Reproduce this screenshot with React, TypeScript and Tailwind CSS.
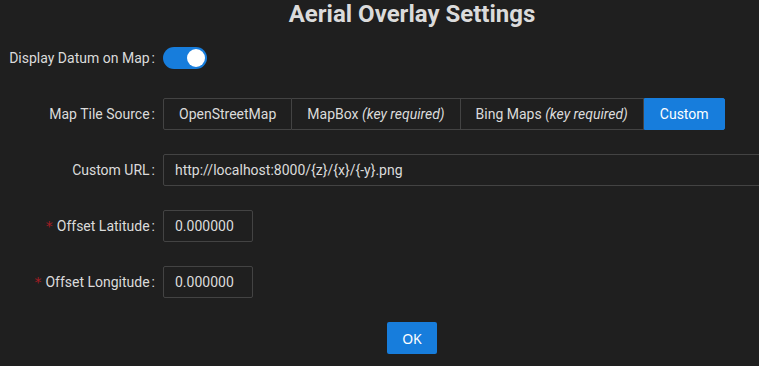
import React from "react";

function Label({ text, required }: { text: string; required?: boolean }) {
  return (
    <div className="w-[163px] shrink-0 flex items-center justify-end h-8 text-[14px] text-[#dbdbdb] whitespace-nowrap">
      {required && <span className="text-[#a61d24] mr-1 text-[14px] leading-none" style={{ fontFamily: "SimSun, 'DejaVu Sans', sans-serif" }}>*</span>}
      <span>{text}</span>
      <span className="ml-[2px] mr-2">:</span>
    </div>
  );
}

export default function App() {
  return (
    <div className="w-[759px] h-[366px] overflow-hidden bg-[#1f1f1f]" style={{ fontFamily: "Roboto, 'Liberation Sans', sans-serif" }}>
      <div className="w-[824px] flex flex-col">
        <h2 className="text-center text-[24px] leading-[28px] font-bold text-[#dbdbdb]">Aerial Overlay Settings</h2>
        <div className="mt-[14px] flex flex-col gap-6">
          <div className="flex items-center">
            <Label text="Display Datum on Map" />
            <div className="relative w-[44px] h-[22px] rounded-full bg-[#177ddc]">
              <div className="absolute top-[2px] right-[2px] w-[18px] h-[18px] rounded-full bg-white" />
            </div>
          </div>
          <div className="flex items-center">
            <Label text="Map Tile Source" />
            <div className="flex h-8 text-[14px] text-[#dbdbdb]">
              <div className="h-8 px-[15px] flex items-center border border-[#434343] rounded-l-[2px]">OpenStreetMap</div>
              <div className="h-8 px-[15px] flex items-center border-y border-r border-[#434343]">MapBox&nbsp;<i>(key required)</i></div>
              <div className="h-8 px-[15px] flex items-center border-y border-r border-[#434343]">Bing Maps&nbsp;<i>(key required)</i></div>
              <div className="h-8 px-[15px] flex items-center border border-[#177ddc] bg-[#177ddc] text-white rounded-r-[2px]">Custom</div>
            </div>
          </div>
          <div className="flex items-center">
            <Label text="Custom URL" />
            <div className="h-8 w-[640px] border border-[#434343] rounded-[2px] px-[11px] flex items-center text-[14px] text-[#dbdbdb]">
              http://localhost:8000/{"{z}"}/{"{x}"}/{"{-y}"}.png
            </div>
          </div>
          <div className="flex items-center">
            <Label text="Offset Latitude" required />
            <div className="h-8 w-[90px] border border-[#434343] rounded-[2px] px-[11px] flex items-center text-[14px] text-[#dbdbdb]">0.000000</div>
          </div>
          <div className="flex items-center">
            <Label text="Offset Longitude" required />
            <div className="h-8 w-[90px] border border-[#434343] rounded-[2px] px-[11px] flex items-center text-[14px] text-[#dbdbdb]">0.000000</div>
          </div>
          <div className="flex justify-center">
            <button className="h-8 w-[50px] rounded-[2px] bg-[#177ddc] text-white text-[14px]" style={{ fontFamily: "'Noto Sans', 'Open Sans', sans-serif" }}>OK</button>
          </div>
        </div>
      </div>
    </div>
  );
}
